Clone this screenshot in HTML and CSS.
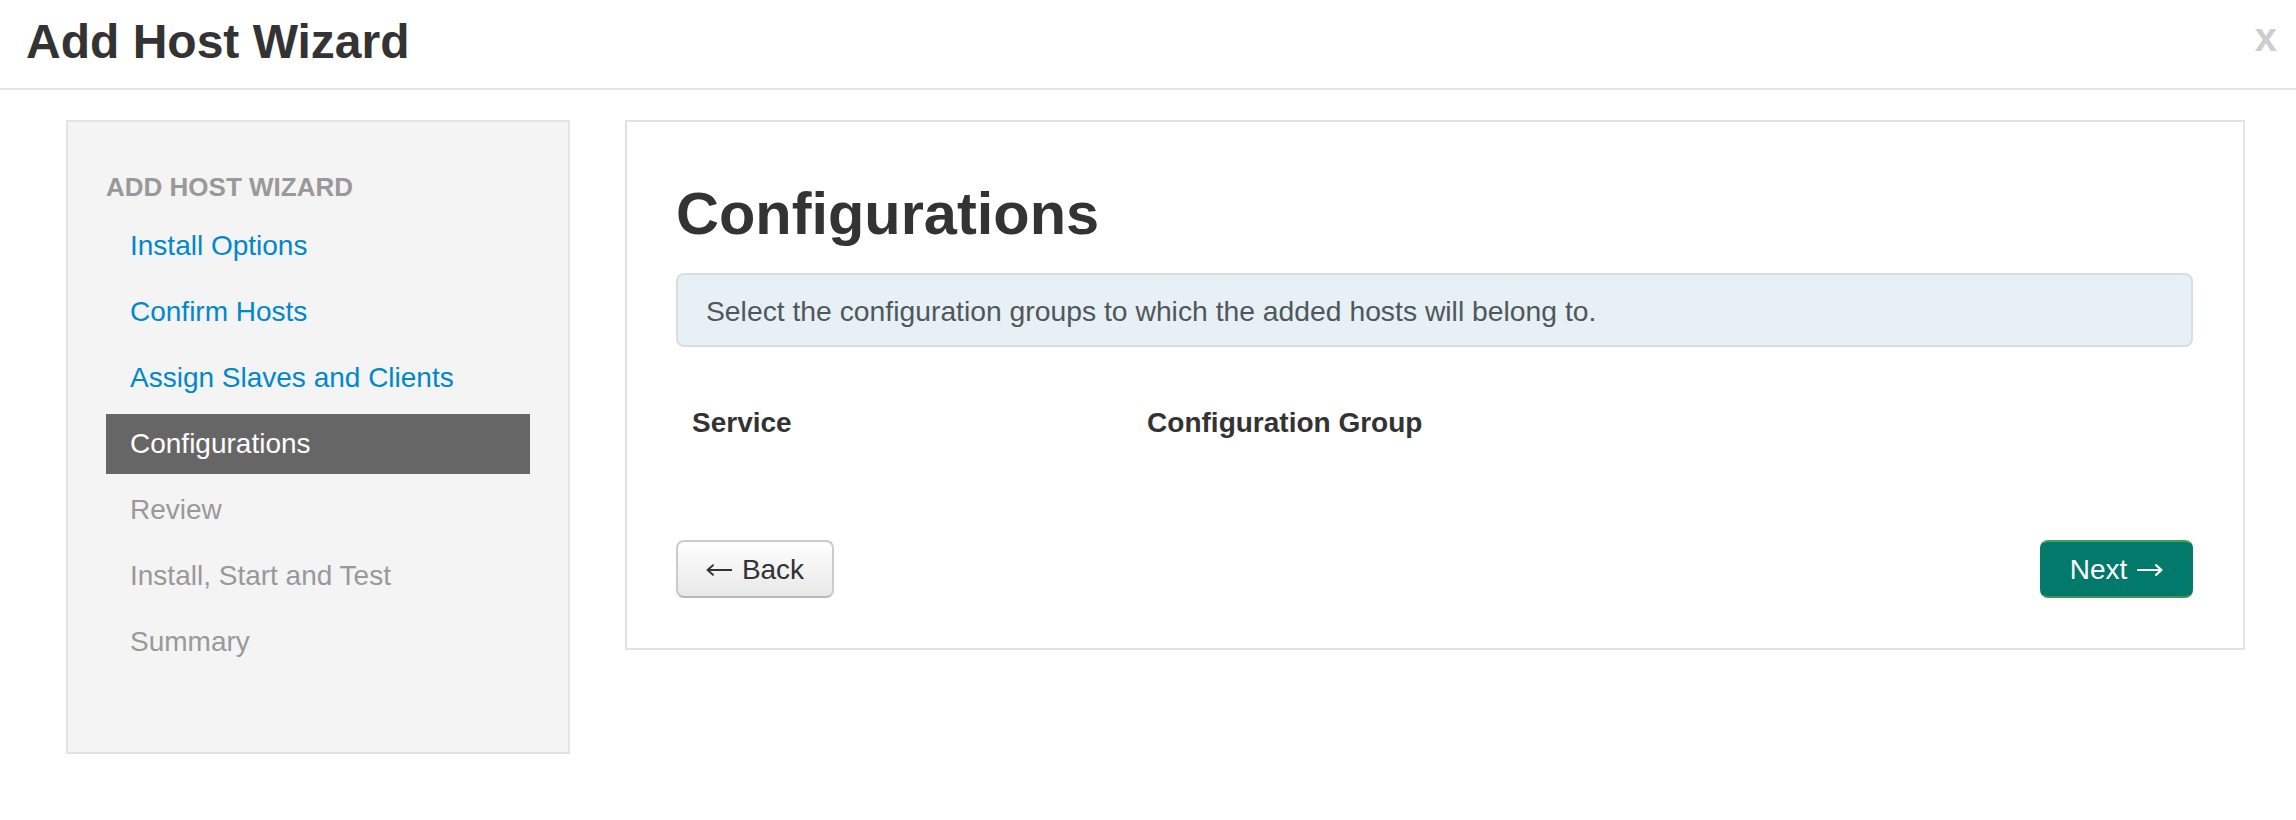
FILE: index.html
```html
<!DOCTYPE html>
<html lang="en">
<head>
<meta charset="utf-8">
<title>Add Host Wizard</title>
<link rel="stylesheet" href="styles.css">
</head>
<body>
<header class="modal-header">
  <h1 class="modal-title">Add Host Wizard</h1>
  <span class="close">x</span>
</header>
<div class="wizard">
  <aside class="steps">
    <div class="steps-header">ADD HOST WIZARD</div>
    <ul class="steps-list">
      <li class="step step-done">Install Options</li>
      <li class="step step-done">Confirm Hosts</li>
      <li class="step step-done">Assign Slaves and Clients</li>
      <li class="step step-active">Configurations</li>
      <li class="step step-todo">Review</li>
      <li class="step step-todo">Install, Start and Test</li>
      <li class="step step-todo">Summary</li>
    </ul>
  </aside>
  <main class="content">
    <h2 class="content-title">Configurations</h2>
    <div class="alert">Select the configuration groups to which the added hosts will belong to.</div>
    <table class="groups">
      <thead>
        <tr><th class="col-service">Service</th><th>Configuration Group</th></tr>
      </thead>
      <tbody></tbody>
    </table>
    <div class="actions">
      <button class="btn btn-back"><svg class="arrow arrow-left" width="26" height="12" viewBox="0 0 26 12" aria-hidden="true"><path d="M25.5 6H1.5M7 1.2L1.5 6L7 10.8"/></svg><span>Back</span></button>
      <button class="btn btn-next"><span>Next</span><svg class="arrow arrow-right" width="26" height="12" viewBox="0 0 26 12" aria-hidden="true"><path d="M0.5 6H24.5M19 1.2L24.5 6L19 10.8"/></svg></button>
    </div>
  </main>
</div>
</body>
</html>
```
FILE: styles.css
```css
html, body {
  margin: 0;
  padding: 0;
  background: #fff;
}
body {
  font-family: "Liberation Sans", Arial, Helvetica, sans-serif;
  color: #333;
  font-size: 28px;
}
.modal-header {
  box-sizing: border-box;
  height: 90px;
  border-bottom: 2px solid #e5e5e5;
  padding: 18px 19px 0 26px;
  display: flex;
  justify-content: space-between;
  align-items: flex-start;
}
.modal-title {
  margin: 0;
  font-size: 48px;
  line-height: 48px;
  font-weight: bold;
  color: #333;
}
.close {
  font-size: 40px;
  line-height: 40px;
  font-weight: bold;
  color: #cdcdcd;
  margin-top: -1px;
}
.wizard {
  display: flex;
  align-items: flex-start;
  gap: 55px;
  padding: 30px 51px 0 66px;
}
.steps {
  box-sizing: border-box;
  width: 504px;
  flex: none;
  background: #f4f4f4;
  border: 2px solid #e3e3e3;
  padding: 45px 38px 80px 38px;
}
.steps-header {
  font-size: 26px;
  line-height: 40px;
  font-weight: bold;
  color: #999;
  text-transform: uppercase;
}
.steps-list {
  list-style: none;
  margin: 9px 0 0 0;
  padding: 0;
  display: flex;
  flex-direction: column;
  gap: 6px;
}
.step {
  height: 60px;
  line-height: 60px;
  padding-left: 24px;
  font-size: 28px;
}
.step-done { color: #0088cc; }
.step-todo { color: #999; }
.step-active {
  background: #666;
  color: #fff;
}
.content {
  flex: 1;
  box-sizing: border-box;
  border: 2px solid #e3e3e3;
  padding: 52px 50px 50px 49px;
  background: #fff;
}
.content-title {
  margin: 0 0 19px 0;
  font-size: 59.5px;
  line-height: 80px;
  font-weight: bold;
  color: #333;
}
.alert {
  background: #e6f0f5;
  border: 2px solid #d5dee3;
  border-radius: 8px;
  padding: 16px 28px 14px 28px;
  line-height: 40px;
  font-size: 28.3px;
  color: #50575c;
  margin-bottom: 40px;
}
.groups {
  width: 100%;
  border-collapse: collapse;
  border-spacing: 0;
}
.groups th {
  text-align: left;
  font-weight: bold;
  padding: 16px;
  line-height: 40px;
  font-size: 28px;
  color: #333;
}
.col-service { width: 30%; }
.actions {
  display: flex;
  justify-content: space-between;
  margin-top: 81px;
}
.btn {
  font-family: "Liberation Sans", Arial, Helvetica, sans-serif;
  font-size: 28px;
  line-height: 40px;
  height: 58px;
  padding: 0;
  border-radius: 8px;
  cursor: pointer;
  margin: 0;
  box-sizing: border-box;
  display: inline-flex;
  align-items: center;
  justify-content: center;
  gap: 10px;
}
.btn span {
  position: relative;
  top: 1px;
}
.arrow {
  flex: none;
  fill: none;
  stroke: currentColor;
  stroke-width: 1.8;
  stroke-linecap: round;
  stroke-linejoin: round;
  position: relative;
  top: 1px;
}
.btn-back {
  width: 158px;
  color: #333;
  background: linear-gradient(#ffffff, #e8e8e8);
  border: 2px solid #cbcbcb;
  border-bottom-color: #b8b8b8;
}
.btn-next {
  width: 153px;
  color: #fff;
  background: #017a6b;
  border: 2px solid #0a7a64;
  border-top-color: #44a05e;
  border-bottom-color: #3e9455;
}
.btn-next .arrow {
  stroke-width: 2.2;
}
```
